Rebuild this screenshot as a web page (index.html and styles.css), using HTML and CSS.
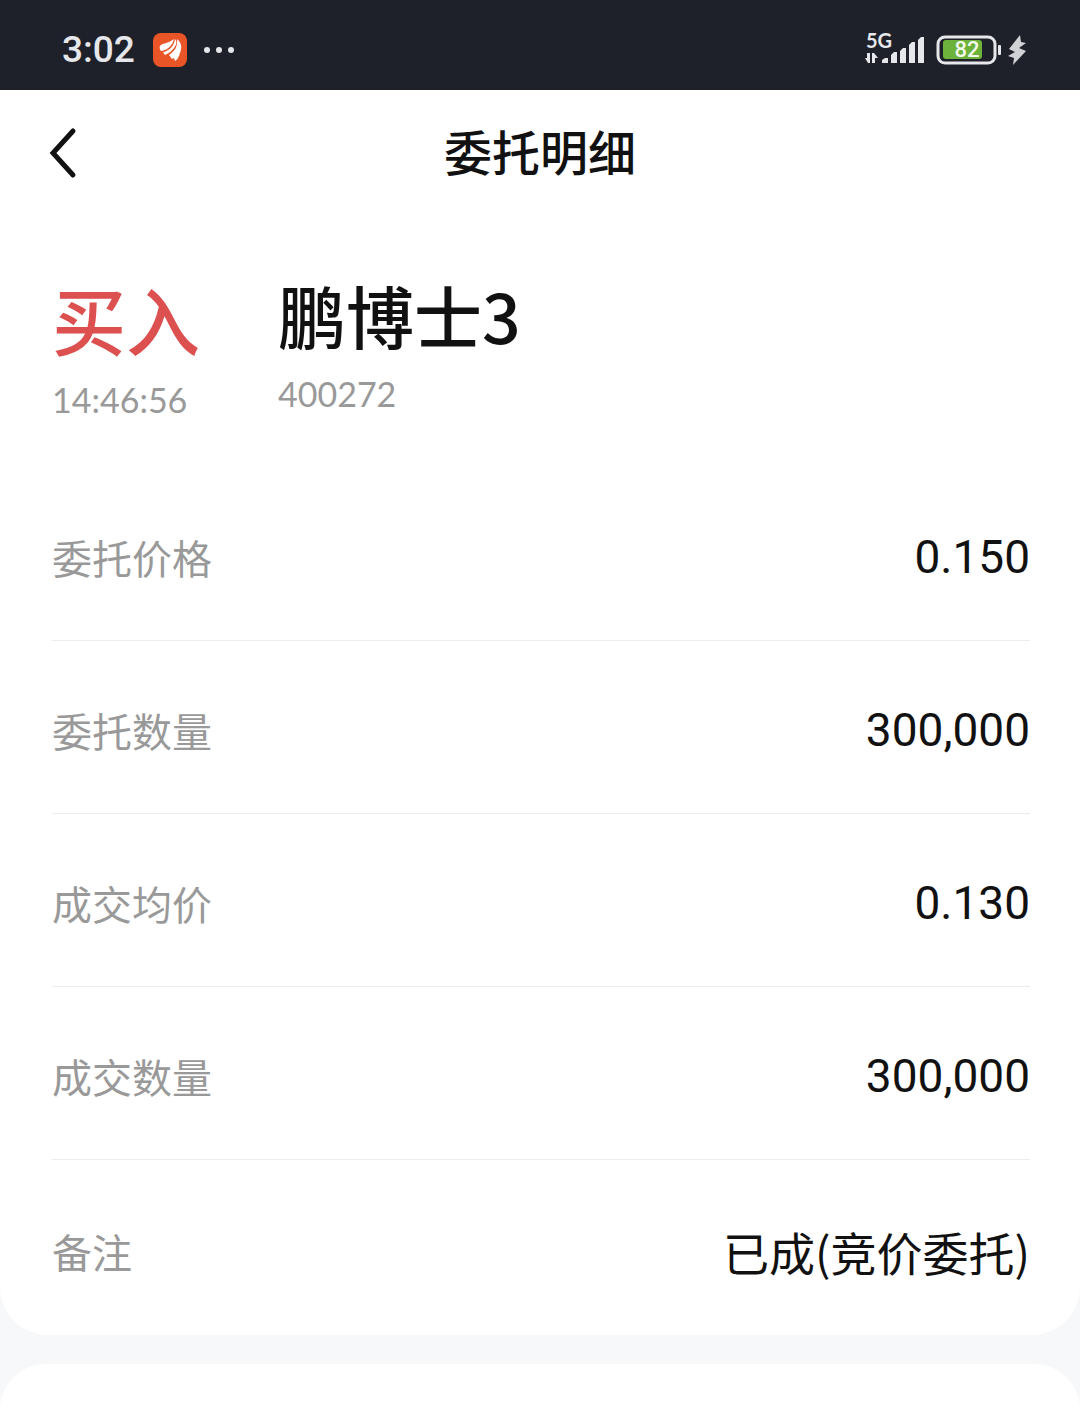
FILE: index.html
```html
<!DOCTYPE html>
<html lang="zh-CN">
  <head>
    <meta charset="UTF-8" />
    <meta name="viewport" content="width=device-width, initial-scale=1.0" />
    <title>委托明细</title>
    <link rel="stylesheet" href="styles.css" />
  </head>
  <body>
    <div class="status-bar">
      <div class="status-left">
        <span class="clock">3:02</span>
        <svg class="app-icon" width="34" height="34" viewBox="0 0 34 34">
          <rect width="34" height="34" rx="8" fill="#ea5528" />
          <path d="M7 13C9 10 15 11 21 6C19 13 15 17 8 18C7 17 6 14 7 13Z" fill="#fff" />
          <path d="M22 6C24 8 24 11 21 15C19 18 16 20 12 22L10 19.500C17 17 21 13 22 6Z" fill="#fff" />
          <path d="M24 6C29 10 29 15 27 20C26 24 24 27 22 28L21 25L19 26L16 22C22 18 25 13 24 6Z" fill="#fff" />
        </svg>
        <svg class="more" width="32" height="8" viewBox="0 0 32 8" fill="#e6e7ea">
          <circle cx="4" cy="4" r="3" />
          <circle cx="16" cy="4" r="3" />
          <circle cx="28" cy="4" r="3" />
        </svg>
      </div>
      <div class="status-right">
        <svg class="signal" width="63" height="48" viewBox="0 -6 63 48" fill="#e6e7ea">
          <text class="network" x="1" y="16">5G</text>
          <path d="M2 21H5V31H3L0 26H2ZM7 21H9L13 26H10V31H7Z" />
          <path d="M17 31V28L20 26H23V31Z" />
          <path d="M26 31V23L29 20H32V31Z" />
          <path d="M35 31V19L38 16H41V31Z" />
          <path d="M44 31V13L47 10H50V31Z" />
          <path d="M53 31V8L56 5H59V31Z" />
        </svg>
        <svg class="battery" width="66" height="30" viewBox="0 0 66 30">
          <rect x="3" y="2" width="57" height="26" rx="7" fill="none" stroke="#e6e7ea" stroke-width="3" />
          <rect x="8" y="5" width="39" height="19" rx="3" fill="#6db33b" />
          <rect x="63" y="10" width="3" height="10" rx="1" fill="#e6e7ea" />
          <text class="level" x="32" y="22" text-anchor="middle">82</text>
        </svg>
        <svg class="bolt" width="18" height="30" viewBox="0 0 18 30" fill="#d0d1d4">
          <path d="M12 0L1 14L7 17L0 21L6 23L5 30L18 16L11 13L18 8L13 7Z" />
        </svg>
      </div>
    </div>

    <main class="card">
      <header class="nav">
        <button class="back" type="button" aria-label="返回">
          <svg width="28" height="52" viewBox="0 0 28 52">
            <path d="M24 4L4 26L24 48" fill="none" stroke="#111" stroke-width="5" stroke-linecap="round" />
          </svg>
        </button>
        <h1 class="title">委托明细</h1>
      </header>

      <section class="summary">
        <div class="side">
          <div class="side-name">买入</div>
          <div class="sub">14:46:56</div>
        </div>
        <div class="stock">
          <div class="stock-name">鹏博士3</div>
          <div class="sub">400272</div>
        </div>
      </section>

      <dl class="detail">
        <div class="row">
          <dt>委托价格</dt>
          <dd class="num">0.150</dd>
        </div>
        <div class="row">
          <dt>委托数量</dt>
          <dd class="num">300,000</dd>
        </div>
        <div class="row">
          <dt>成交均价</dt>
          <dd class="num">0.130</dd>
        </div>
        <div class="row">
          <dt>成交数量</dt>
          <dd class="num">300,000</dd>
        </div>
        <div class="row">
          <dt>备注</dt>
          <dd>已成(竞价委托)</dd>
        </div>
      </dl>
    </main>

    <section class="card card-next"></section>
  </body>
</html>
```
FILE: styles.css
```css
* {
  box-sizing: border-box;
  padding: 0;
  margin: 0;
}

body {
  display: flex;
  flex-direction: column;
  min-height: 100vh;
  font-family: "Noto Sans CJK SC", sans-serif;
  color: #111;
  background-color: #f6f8fa;
}

/* status bar */
.status-bar {
  display: flex;
  align-items: center;
  justify-content: space-between;
  height: 90px;
  padding: 10px 54px 0 62px;
  color: #e6e7ea;
  background-color: #1e212a;
}

.status-left,
.status-right {
  display: flex;
  align-items: center;
}

.status-left {
  gap: 16px;
}

.status-right {
  gap: 7px;
}

.clock {
  font-family: Roboto, sans-serif;
  font-size: 37px;
  font-weight: 500;
  line-height: 40px;
}

.app-icon {
  margin-left: 2px;
}

.network {
  font-family: Lato, sans-serif;
  font-size: 20px;
  font-weight: 700;
}

.level {
  font-family: Roboto, sans-serif;
  font-size: 22px;
  font-weight: 500;
  fill: #f4f9ee;
}

/* cards */
.card {
  background-color: #fff;
  border-radius: 0 0 48px 48px;
}

.card-next {
  flex: 1;
  min-height: 46px;
  margin-top: 29px;
  border-radius: 48px 48px 0 0;
}

.nav {
  display: grid;
  grid-template-columns: 1fr auto 1fr;
  align-items: center;
  height: 126px;
  padding: 0 49px;
}

.back {
  display: flex;
  justify-self: start;
  border: none;
  background: none;
  cursor: pointer;
}

.title {
  padding-bottom: 6px;
  font-size: 48px;
  font-weight: 500;
  line-height: 72px;
}

.summary {
  display: flex;
  gap: 78px;
  padding: 56px 52px 40px;
}

.side-name {
  margin-bottom: 8px;
  font-size: 74px;
  font-weight: 500;
  line-height: 92px;
  color: #dc5050;
}

.stock-name {
  margin-bottom: 8px;
  font-size: 68px;
  font-weight: 500;
  line-height: 86px;
}

.sub {
  font-family: Lato, sans-serif;
  font-size: 34px;
  line-height: 56px;
  color: #999;
}

.detail {
  padding: 0 50px 0 52px;
}

.row {
  display: flex;
  align-items: center;
  justify-content: space-between;
  height: 173px;
  padding-top: 6px;
  border-bottom: 1px solid #ececec;
}

.row:last-child {
  height: 175px;
  border-bottom: none;
}

dt {
  font-size: 40px;
  line-height: 60px;
  color: #999;
}

dd {
  font-size: 46px;
  line-height: 60px;
}

.num {
  font-family: Roboto, sans-serif;
}
```
